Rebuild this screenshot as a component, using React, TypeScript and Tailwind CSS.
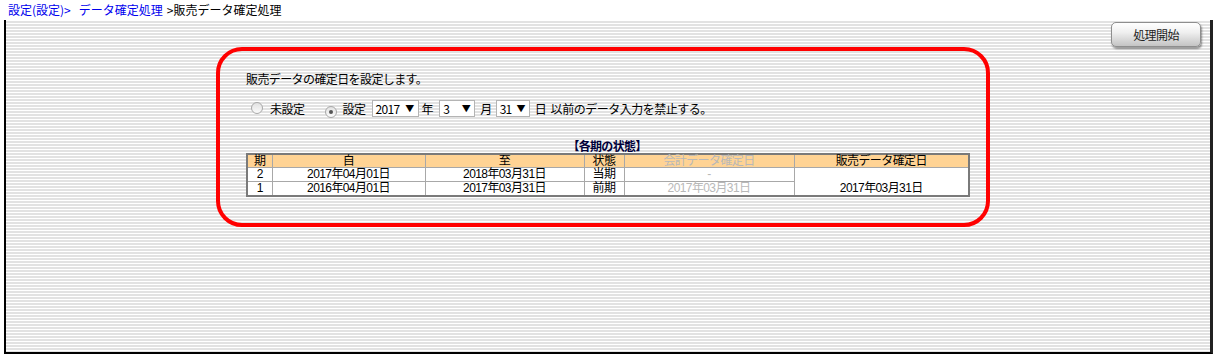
import React from "react";

const font = "font-['MS_PGothic','Noto_Sans_CJK_JP',sans-serif]";
const tfont = "font-['Liberation_Sans','Noto_Sans_CJK_JP',sans-serif]";

function Radio({ checked }: { checked?: boolean }) {
  return (
    <span className="inline-flex w-[12px] h-[12px] rounded-full border border-[#a8a8a8] bg-[linear-gradient(#e2e2e2,#fbfbfb)] items-center justify-center shrink-0">
      {checked && <span className="w-[4px] h-[4px] rounded-full bg-[#555]" />}
    </span>
  );
}

function Sel({ w, v }: { w: string; v: string }) {
  return (
    <span className={`inline-flex h-[17px] ${w} border border-[#b4b4b4] bg-white items-center justify-between pl-[3px] pr-[4px] text-[12px] leading-[15px] shrink-0 tracking-[-0.06em]`}>
      <span>{v}</span>
      <span className="text-[9px]">▼</span>
    </span>
  );
}

const td = "border border-[#a8a8a8] p-0 text-center leading-[13px] h-[14px]";
const th = "font-normal border border-[#a8a8a8] p-0 leading-[12px] h-[13px]";

export default function App() {
  return (
    <div className={`w-[1216px] h-[356px] bg-white text-black ${font} text-[12px]`}>
      <div className="h-[20px] pl-[8px] leading-[20px] text-[12px] whitespace-nowrap">
        <span className="text-[#0000ee]">設定(設定)&gt;</span>
        <span className="text-[#0000ee] ml-[8px]">データ確定処理</span>
        <span className="ml-[4px]">&gt;販売データ確定処理</span>
      </div>
      <div className="ml-[4px] w-[1209px] h-[334px] border-l-2 border-b-2 border-black border-r-[3px] border-r-[#222] bg-[repeating-linear-gradient(to_bottom,#ffffff_0px,#ffffff_1px,#e2e2e2_1px,#e2e2e2_3px)]">
        <div className="h-[27px] flex justify-end pr-[9px] pt-[2px]">
          <button className="w-[90px] h-[25px] rounded-[5px] border border-[#8e8e8e] bg-[linear-gradient(#ffffff,#f0f0f0_40%,#d6d6d6_75%,#c4c4c4)] shadow-[1px_2px_2px_rgba(0,0,0,0.4)] text-[12px] leading-[23px] text-[#222] tracking-[-0.05em]">
            処理開始
          </button>
        </div>
        <div className="ml-[210px] w-[774px] h-[180px] border-4 border-[#ff0000] rounded-[26px] pl-[26px] pt-[20px]">
          <div className="h-[16px] leading-[16px] tracking-[-0.05em] whitespace-nowrap">
            販売データの確定日を設定します。
          </div>
          <div className="mt-[13px] h-[17px] flex items-center whitespace-nowrap tracking-[-0.04em]">
            <span className="ml-[5px]"><Radio /></span>
            <span className="ml-[7px]">未設定</span>
            <span className="ml-[20px]"><Radio checked /></span>
            <span className="ml-[6px]">設定</span>
            <span className="ml-[6px] flex"><Sel w="w-[47px]" v="2017" /></span>
            <span className="ml-[3px]">年</span>
            <span className="ml-[6px] flex"><Sel w="w-[36px]" v="3" /></span>
            <span className="ml-[5px]">月</span>
            <span className="ml-[4px] flex"><Sel w="w-[34px]" v="31" /></span>
            <span className="ml-[5px]">日&nbsp;&nbsp;以前のデータ入力を禁止する。</span>
          </div>
          <div className="w-[722px] mt-[22px]">
            <div className="h-[14px] leading-[14px] text-center font-bold text-[#00003a] tracking-[-0.06em]">【各期の状態】</div>
            <table className={`w-[722px] border-collapse border-2 border-[#7a7a7a] text-[12px] table-fixed tracking-[-0.05em] ${tfont}`}>
              <colgroup>
                <col className="w-[25px]" />
                <col className="w-[153px]" />
                <col className="w-[159px]" />
                <col className="w-[40px]" />
                <col className="w-[170px]" />
                <col className="w-[175px]" />
              </colgroup>
              <thead>
                <tr className="bg-[#ffd394]">
                  <th className={th}>期</th>
                  <th className={th}>自</th>
                  <th className={th}>至</th>
                  <th className={th}>状態</th>
                  <th className={`${th} text-[#b8b8b8]`}>会計データ確定日</th>
                  <th className={th}>販売データ確定日</th>
                </tr>
              </thead>
              <tbody className="bg-white">
                <tr>
                  <td className={td}>2</td>
                  <td className={td}>2017年04月01日</td>
                  <td className={td}>2018年03月31日</td>
                  <td className={td}>当期</td>
                  <td className={`${td} text-[#b8b8b8]`}>-</td>
                  <td rowSpan={2} className="border border-[#a8a8a8] p-0 text-center align-bottom leading-[13px]">2017年03月31日</td>
                </tr>
                <tr>
                  <td className={td}>1</td>
                  <td className={td}>2016年04月01日</td>
                  <td className={td}>2017年03月31日</td>
                  <td className={td}>前期</td>
                  <td className={`${td} text-[#b8b8b8]`}>2017年03月31日</td>
                </tr>
              </tbody>
            </table>
          </div>
        </div>
      </div>
    </div>
  );
}
